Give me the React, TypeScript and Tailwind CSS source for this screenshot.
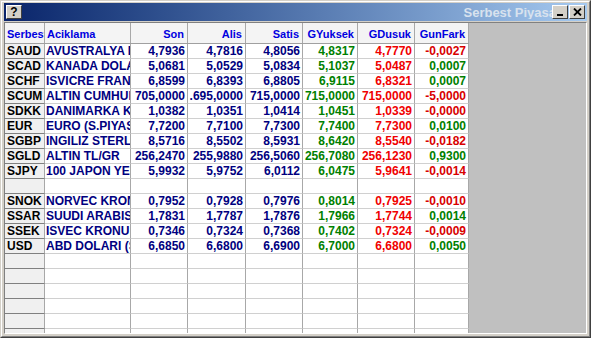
import React from "react";

type Row = {
  code: string;
  name: string;
  son: string;
  alis: string;
  satis: string;
  hi: string;
  lo: string;
  diff: string;
};

const rows: (Row | null)[] = [
  { code: "SAUD", name: "AVUSTRALYA DOLARI", son: "4,7936", alis: "4,7816", satis: "4,8056", hi: "4,8317", lo: "4,7770", diff: "-0,0027" },
  { code: "SCAD", name: "KANADA DOLARI", son: "5,0681", alis: "5,0529", satis: "5,0834", hi: "5,1037", lo: "5,0487", diff: "0,0007" },
  { code: "SCHF", name: "ISVICRE FRANGI", son: "6,8599", alis: "6,8393", satis: "6,8805", hi: "6,9115", lo: "6,8321", diff: "0,0007" },
  { code: "SCUM", name: "ALTIN CUMHURIYET", son: "705,0000", alis: ".695,0000", satis: "715,0000", hi: "715,0000", lo: "715,0000", diff: "-5,0000" },
  { code: "SDKK", name: "DANIMARKA KRONU", son: "1,0382", alis: "1,0351", satis: "1,0414", hi: "1,0451", lo: "1,0339", diff: "-0,0000" },
  { code: "EUR", name: "EURO (S.PIYASA)", son: "7,7200", alis: "7,7100", satis: "7,7300", hi: "7,7400", lo: "7,7300", diff: "0,0100" },
  { code: "SGBP", name: "INGILIZ STERLINI", son: "8,5716", alis: "8,5502", satis: "8,5931", hi: "8,6420", lo: "8,5540", diff: "-0,0182" },
  { code: "SGLD", name: "ALTIN TL/GR", son: "256,2470", alis: "255,9880", satis: "256,5060", hi: "256,7080", lo: "256,1230", diff: "0,9300" },
  { code: "SJPY", name: "100 JAPON YENI", son: "5,9932", alis: "5,9752", satis: "6,0112", hi: "6,0475", lo: "5,9641", diff: "-0,0014" },
  null,
  { code: "SNOK", name: "NORVEC KRONU", son: "0,7952", alis: "0,7928", satis: "0,7976", hi: "0,8014", lo: "0,7925", diff: "-0,0010" },
  { code: "SSAR", name: "SUUDI ARABISTAN RIYALI", son: "1,7831", alis: "1,7787", satis: "1,7876", hi: "1,7966", lo: "1,7744", diff: "0,0014" },
  { code: "SSEK", name: "ISVEC KRONU", son: "0,7346", alis: "0,7324", satis: "0,7368", hi: "0,7402", lo: "0,7324", diff: "-0,0009" },
  { code: "USD", name: "ABD DOLARI (S.PIYASA)", son: "6,6850", alis: "6,6800", satis: "6,6900", hi: "6,7000", lo: "6,6800", diff: "0,0050" },
  null,
  null,
  null,
  null,
  null,
  null,
];

const font = { fontFamily: '"Liberation Sans", Arial, sans-serif' };

function Btn({ children }: { children: React.ReactNode }) {
  return (
    <div className="w-[16px] h-[14px] bg-[#d4d0c8] border-t border-l border-t-white border-l-white border-b border-r border-b-[#404040] border-r-[#404040] flex items-center justify-center">
      {children}
    </div>
  );
}

const cell = "h-full shrink-0 overflow-hidden whitespace-nowrap border-r border-r-[#a8a8a8] flex items-center";

export default function App() {
  return (
    <div
      className="w-[591px] h-[338px] bg-[#d4d0c8] border border-t-[#d4d0c8] border-l-[#d4d0c8] border-b-[#404040] border-r-[#404040]"
      style={font}
    >
      <div className="w-full h-full flex flex-col border border-t-white border-l-white border-b-[#808080] border-r-[#808080] pt-[1px] px-[2px] pb-[2px]">
        {/* caption bar */}
        <div className="h-[18px] shrink-0 flex items-center pl-[2px] pr-[2px] bg-gradient-to-r from-[#0a246a] to-[#a6caf0]">
          <Btn>
            <span className="text-[12px] font-bold leading-none text-black">?</span>
          </Btn>
          <div className="flex-1 overflow-hidden flex justify-end -mr-[4px]">
            <span className="text-[13px] font-bold text-[#d8e2ee] whitespace-nowrap leading-none">Serbest Piyasa</span>
          </div>
          <div className="relative z-10 flex">
            <Btn>
              <svg width="8" height="8" viewBox="0 0 8 8">
                <rect x="1" y="6" width="6" height="2" fill="#000" />
              </svg>
            </Btn>
            <div className="ml-[1px]">
              <Btn>
                <svg width="9" height="8" viewBox="0 0 9 8">
                  <path d="M1 0.5 L8 7.5 M8 0.5 L1 7.5" stroke="#000" strokeWidth="1.8" />
                </svg>
              </Btn>
            </div>
          </div>
        </div>

        {/* quote grid */}
        <div className="mt-[1px] flex-1 min-h-0 flex overflow-hidden border border-t-[#808080] border-l-[#808080] border-b-white border-r-white">
          <div className="w-[464px] shrink-0 flex flex-col bg-white">
            {/* header */}
            <div className="h-[21px] shrink-0 flex border-b border-b-[#a0a0a0] bg-[#f4f4f4] text-[11px] font-bold text-[#0000e0]">
              <div className={`${cell} w-[40px] pl-[2px] pt-[3px] border-r-[#808080]`}>Serbest</div>
              <div className={`${cell} w-[86px] pl-[2px] pt-[3px]`}>Aciklama</div>
              <div className={`${cell} w-[57px] justify-end pr-[3px] pt-[3px]`}>Son</div>
              <div className={`${cell} w-[58px] justify-end pr-[3px] pt-[3px]`}>Alis</div>
              <div className={`${cell} w-[57px] justify-end pr-[3px] pt-[3px]`}>Satis</div>
              <div className={`${cell} w-[55px] justify-end pr-[3px] pt-[3px]`}>GYuksek</div>
              <div className={`${cell} w-[57px] justify-end pr-[3px] pt-[3px]`}>GDusuk</div>
              <div className={`${cell} w-[54px] justify-end pr-[3px] pt-[3px]`}>GunFark</div>
            </div>
            {rows.map((r, i) => (
              <div key={i} className="h-[15px] shrink-0 flex text-[12px] font-bold leading-[14px]">
                <div className={`${cell} w-[40px] pl-[2px] bg-[#f0f0f0] border-b border-b-[#808080] border-r-[#808080] text-black`}>
                  {r?.code}
                </div>
                <div className={`${cell} w-[86px] pl-[1px] border-b border-b-[#d0d0d0] text-[#000080]`}>{r?.name}</div>
                <div className={`${cell} w-[57px] justify-end pr-[2px] border-b border-b-[#d0d0d0] text-[#000080]`}>{r?.son}</div>
                <div className={`${cell} w-[58px] justify-end pr-[2px] border-b border-b-[#d0d0d0] text-[#000080]`}>{r?.alis}</div>
                <div className={`${cell} w-[57px] justify-end pr-[2px] border-b border-b-[#d0d0d0] text-[#000080]`}>{r?.satis}</div>
                <div className={`${cell} w-[55px] justify-end pr-[2px] border-b border-b-[#d0d0d0] text-[#008000]`}>{r?.hi}</div>
                <div className={`${cell} w-[57px] justify-end pr-[2px] border-b border-b-[#d0d0d0] text-[#f00000]`}>{r?.lo}</div>
                <div
                  className={`${cell} w-[54px] justify-end pr-[2px] border-b border-b-[#d0d0d0] ${
                    r && r.diff.startsWith("-") ? "text-[#d80000]" : "text-[#008000]"
                  }`}
                >
                  {r?.diff}
                </div>
              </div>
            ))}
          </div>
          <div className="flex-1 bg-[#c0c0c0]" />
        </div>
      </div>
    </div>
  );
}
